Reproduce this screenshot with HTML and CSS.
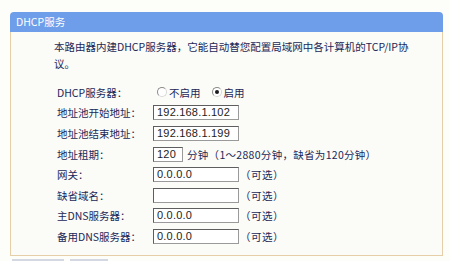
FILE: index.html
```html
<!DOCTYPE html>
<html lang="zh-CN">
<head>
<meta charset="utf-8">
<link rel="stylesheet" href="styles.css">
</head>
<body>
<div class="panel">
  <div class="panel-head">DHCP服务</div>
  <div class="panel-body">
    <p class="intro">本路由器内建DHCP服务器，它能自动替您配置局域网中各计算机的TCP/IP协议。</p>
    <div class="form">
      <div class="label">DHCP服务器：</div>
      <div class="ctrl">
        <span class="radio"></span><span class="radio-text">不启用</span>
        <span class="radio checked"></span><span class="radio-text">启用</span>
      </div>

      <div class="label">地址池开始地址：</div>
      <div class="ctrl"><span class="input">192.168.1.102</span></div>

      <div class="label">地址池结束地址：</div>
      <div class="ctrl"><span class="input">192.168.1.199</span></div>

      <div class="label">地址租期：</div>
      <div class="ctrl"><span class="input short">120</span><span class="note">分钟（1～2880分钟，缺省为120分钟）</span></div>

      <div class="label">网关：</div>
      <div class="ctrl"><span class="input">0.0.0.0</span><span class="opt">（可选）</span></div>

      <div class="label">缺省域名：</div>
      <div class="ctrl"><span class="input"></span><span class="opt">（可选）</span></div>

      <div class="label">主DNS服务器：</div>
      <div class="ctrl"><span class="input">0.0.0.0</span><span class="opt">（可选）</span></div>

      <div class="label">备用DNS服务器：</div>
      <div class="ctrl"><span class="input">0.0.0.0</span><span class="opt">（可选）</span></div>
    </div>
  </div>
</div>
<div class="next"><span class="next-a"></span><span class="next-b"></span></div>
</body>
</html>
```

FILE: styles.css
```css
html, body {
  margin: 0;
  padding: 0;
}
body {
  background: #fdfdf9;
  font-family: "Noto Sans CJK SC", "Noto Sans", sans-serif;
  font-size: 10.5px;
  color: #1a2858;
  padding: 12px 7px 0 10px;
  width: 433px;
  height: 249px;
  overflow: hidden;
  box-sizing: content-box;
}
.panel {
  width: 433px;
}
.panel-head {
  height: 20px;
  line-height: 20px;
  background: #6e9eea;
  color: #ffffff;
  padding-left: 6px;
  border-radius: 4px 4px 0 0;
  font-size: 10.5px;
}
.panel-body {
  border: 1px solid #e6cfa8;
  border-top: none;
  background: #fbfbf7;
  padding: 6px 10px 8px 43px;
}
.intro {
  margin: 0;
  line-height: 17px;
  width: 362px;
}
.form {
  display: grid;
  grid-template-columns: 96px auto;
  grid-auto-rows: 20.6px;
  margin-top: 10px;
  padding-left: 3px;
}
.label {
  display: flex;
  align-items: center;
}
.ctrl {
  display: flex;
  align-items: center;
}
.radio {
  width: 8px;
  height: 8px;
  border-radius: 50%;
  border: 1px solid #8a8a8a;
  border-right-color: #d8d8d8;
  border-bottom-color: #d8d8d8;
  background: #ffffff;
  margin-left: 4px;
  margin-right: 2px;
  position: relative;
}
.radio.checked {
  margin-left: 11px;
}
.radio.checked::after {
  content: "";
  position: absolute;
  left: 2px;
  top: 2px;
  width: 4px;
  height: 4px;
  border-radius: 50%;
  background: #1a1a1a;
}
.input {
  box-sizing: border-box;
  width: 86px;
  height: 15px;
  border: 1px solid #5e5e5e;
  border-right-color: #9a9a9a;
  border-bottom-color: #9a9a9a;
  background: #ffffff;
  font-family: "Liberation Sans", Arial, sans-serif;
  font-size: 11px;
  line-height: 13px;
  color: #222222;
  padding-left: 3px;
  letter-spacing: 0.2px;
}
.input.short {
  width: 30px;
}
.note {
  margin-left: 4px;
  letter-spacing: 0.3px;
}
.opt {
  margin-left: 1px;
  letter-spacing: 0.5px;
}
.next {
  display: flex;
  gap: 6px;
  margin-top: 3px;
  padding-left: 2px;
}
.next-a, .next-b {
  height: 3px;
  background: #d3d8e2;
}
.next-a {
  width: 52px;
}
.next-b {
  width: 38px;
}
```
